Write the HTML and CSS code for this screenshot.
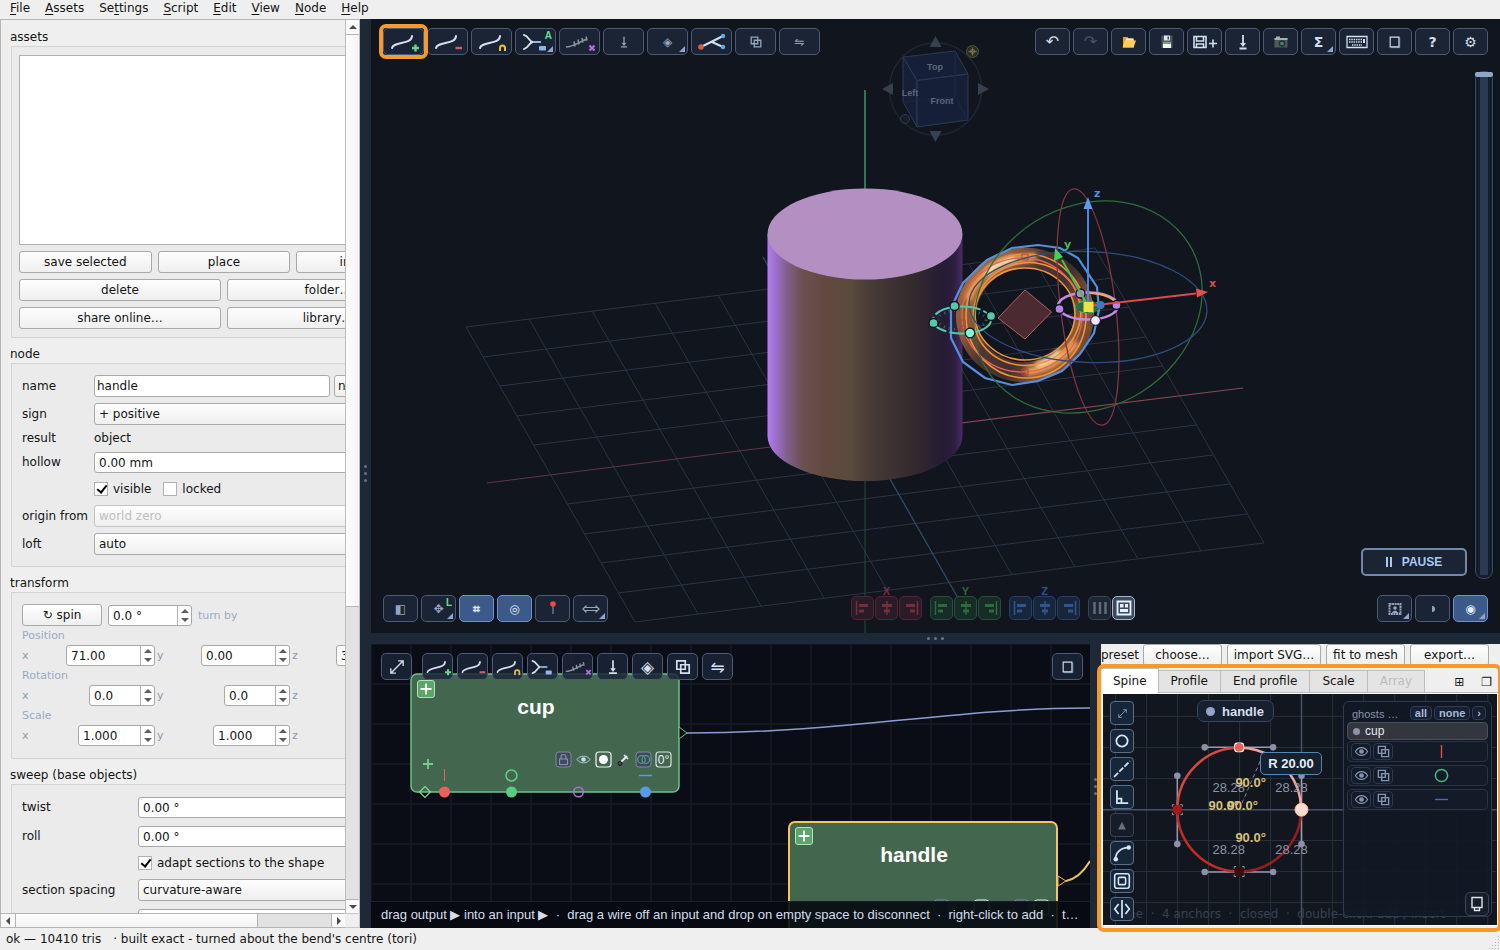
FILE: index.html
```html
<!DOCTYPE html>
<html lang="en">
<head>
<meta charset="utf-8">
<title>Modeller</title>
<link rel="stylesheet" href="styles.css">
</head>
<body>
<svg class="defs" aria-hidden="true">
  <symbol id="curve" viewBox="0 0 32 24"><path d="M4 18c1-7 20-3 20-12" fill="none" stroke="currentColor" stroke-width="2" stroke-linecap="round"/></symbol>
  <symbol id="curve-add" viewBox="0 0 32 24"><use href="#curve"/><path d="M24 18h7M27.500 14.500v7" stroke="#6fd28c" stroke-width="2.400"/></symbol>
  <symbol id="curve-del" viewBox="0 0 32 24"><use href="#curve"/><path d="M23.500 18h6.500" stroke="#d0606c" stroke-width="2.400"/></symbol>
  <symbol id="curve-snap" viewBox="0 0 32 24"><use href="#curve"/><path d="M24 21v-3a2.500 2.500 0 0 1 5 0v3" fill="none" stroke="#e8c040" stroke-width="2"/></symbol>
  <symbol id="merge" viewBox="0 0 32 24"><path d="M4 5c5 1 5 7 9 7c-4 0-4 6-9 7" fill="none" stroke="currentColor" stroke-width="2" stroke-linecap="round"/><path d="M13 12h8" stroke="#8fb4ee" stroke-width="2"/><rect x="19" y="16" width="7" height="4.500" rx="1" fill="#8fb4ee"/></symbol>
  <symbol id="ticks" viewBox="0 0 32 24"><path d="M2 17c7 0 13-5 21-8M10 11.500l1 5M14 9.500l1 5M18 8l1 4.500M22 6.500l1 4" fill="none" stroke="#8b93a3" stroke-width="1.600"/><path d="M25.500 15.500l5 5M30.500 15.500l-5 5" stroke="#b06fdc" stroke-width="2.200"/></symbol>
  <symbol id="branch" viewBox="0 0 32 24"><path d="M5 17l10-5l12-6M16 12l11 5" fill="none" stroke="#d5deee" stroke-width="2"/><circle cx="5" cy="17" r="2.800" fill="#e05a40"/><circle cx="27" cy="6" r="2.200" fill="#58b0e8"/><circle cx="27" cy="17" r="2.200" fill="#58b0e8"/></symbol>
  <symbol id="copy" viewBox="0 0 16 16"><path d="M2.500 2.500h7.500v7.500h-7.500zM6 6h7.500v7.500h-7.500z" fill="none" stroke="currentColor" stroke-width="1.500"/></symbol>
  <symbol id="down" viewBox="0 0 16 16"><path d="M8 2v8M4.500 13.500h7" fill="none" stroke="currentColor" stroke-width="1.500"/><path d="M5.500 9h5l-2.500 3.500z" fill="currentColor"/></symbol>
  <symbol id="expand" viewBox="0 0 16 16"><path d="M2.500 13.500l11-11M9 2.500h4.500v4.500M2.500 9v4.500h4.500" fill="none" stroke="currentColor" stroke-width="1.200"/></symbol>
  <symbol id="eye" viewBox="0 0 16 16"><path d="M1.500 8c3-5.500 10-5.500 13 0c-3 5.500-10 5.500-13 0z" fill="none" stroke="currentColor" stroke-width="1.200"/><circle cx="8" cy="8" r="2.500" fill="currentColor"/></symbol>
  <symbol id="plus-badge" viewBox="0 0 18 18"><rect x=".5" y=".5" width="17" height="17" rx="2.500" fill="#5aa569" stroke="#b4e0bd"/><path d="M9 3.500v11M3.500 9h11" stroke="#fff" stroke-width="1.800"/></symbol>
  <symbol id="shadow-page" viewBox="0 0 16 16"><path d="M13.500 3v11.500h-10" fill="none" stroke="#5f86b8" stroke-width="1"/><path d="M2.500 2.500h10v11h-10z" fill="none" stroke="currentColor" stroke-width="1.300"/></symbol>
  <symbol id="align" viewBox="0 0 16 18"><path d="M1.500 2v14" stroke="currentColor" stroke-width="1.500"/><path d="M4 6.500h9M4 12h5" stroke="currentColor" stroke-width="3"/></symbol>
  <symbol id="align-mid" viewBox="0 0 16 18"><path d="M8 2v14" stroke="currentColor" stroke-width="1.500"/><path d="M3 6.500h10M5 12h6" stroke="currentColor" stroke-width="3"/></symbol>
</svg>

<nav class="menubar" aria-label="Menu">
  <button><u>F</u>ile</button><button><u>A</u>ssets</button><button>Se<u>t</u>tings</button><button><u>S</u>cript</button><button><u>E</u>dit</button><button><u>V</u>iew</button><button><u>N</u>ode</button><button><u>H</u>elp</button>
</nav>

<main class="main">
  <aside class="side">
    <div class="scroll-area"><div class="side-content">
      <section>
        <h2>assets</h2>
        <div class="group assets">
          <div class="asset-list" role="listbox" aria-label="assets"></div>
          <div class="btn-row"><button class="btn">save selected</button><button class="btn">place</button><button class="btn">insert…</button></div>
          <div class="btn-row"><button class="btn">delete</button><button class="btn">folder…</button></div>
          <div class="btn-row"><button class="btn">share online…</button><button class="btn">library…</button></div>
        </div>
      </section>
      <section>
        <h2>node</h2>
        <div class="group form node-form">
          <label for="name">name</label><div class="name-row"><input class="field name-field" id="name" value="handle"><button class="btn name-btn">new</button></div>
          <label for="sign">sign</label><select class="field combo" id="sign"><option>+ positive</option></select>
          <span>result</span><span>object</span>
          <label for="hollow">hollow</label><input class="field num" id="hollow" value="0.00 mm">
          <span></span><div class="checks"><label><input type="checkbox" checked>visible</label><label><input type="checkbox">locked</label></div>
          <label for="origin">origin from</label><select class="field combo" id="origin" disabled><option>world zero</option></select>
          <label for="loft">loft</label><select class="field combo" id="loft"><option>auto</option></select>
        </div>
      </section>
      <section>
        <h2>transform</h2>
        <div class="group transform">
          <div class="spin-row"><button class="btn spin-btn">↻ spin</button><span class="spin turn"><input class="field num" id="turn" value="0.0 °"><i class="steps"></i></span><label for="turn" class="hint">turn by</label></div>
          <h3>Position</h3>
          <div class="xyz w-pos"><label>x<span class="spin"><input class="field num" value="71.00"><i class="steps"></i></span></label><label>y<span class="spin"><input class="field num" value="0.00"><i class="steps"></i></span></label><label>z<span class="spin"><input class="field num" value="35.00"><i class="steps"></i></span></label></div>
          <h3>Rotation</h3>
          <div class="xyz w-rot"><label>x<span class="spin"><input class="field num" value="0.0"><i class="steps"></i></span></label><label>y<span class="spin"><input class="field num" value="0.0"><i class="steps"></i></span></label><label>z<span class="spin"><input class="field num" value="0.0"><i class="steps"></i></span></label></div>
          <h3>Scale</h3>
          <div class="xyz w-scale"><label>x<span class="spin"><input class="field num" value="1.000"><i class="steps"></i></span></label><label>y<span class="spin"><input class="field num" value="1.000"><i class="steps"></i></span></label><label>z<span class="spin"><input class="field num" value="1.000"><i class="steps"></i></span></label></div>
        </div>
      </section>
      <section>
        <h2>sweep (base objects)</h2>
        <div class="group form sweep-form">
          <label for="twist">twist</label><input class="field num" id="twist" value="0.00 °">
          <label for="roll">roll</label><input class="field num" id="roll" value="0.00 °">
          <span></span><div class="checks"><label><input type="checkbox" checked>adapt sections to the shape</label></div>
          <label for="spacing">section spacing</label><select class="field combo" id="spacing"><option>curvature-aware</option></select>
          <label for="count">sections</label><input class="field num" id="count" value="">
        </div>
      </section>
    </div></div>
    <div class="vbar"><button class="arrow up" aria-label="Scroll up"></button><div class="vthumb"></div><div class="vtrack"></div><button class="arrow down" aria-label="Scroll down"></button></div>
    <div class="hbar"><button class="arrow left" aria-label="Scroll left"></button><div class="hthumb"></div><div class="htrack"></div><button class="arrow right" aria-label="Scroll right"></button></div>
    <div class="corner"></div>
  </aside>
  <div class="split split-v"><i></i><i></i><i></i></div>

  <div class="work">
    <section class="viewport" aria-label="3D view">
      <svg class="fill" viewBox="371 19 1129 614" preserveAspectRatio="xMidYMid slice">
        <defs>
          <linearGradient id="cyl"><stop offset="0" stop-color="#b47cf0"/><stop offset=".05" stop-color="#9a6cc4"/><stop offset=".1" stop-color="#80608c"/><stop offset=".18" stop-color="#6a5050"/><stop offset=".3" stop-color="#62493f"/><stop offset=".42" stop-color="#5a4a3e"/><stop offset=".55" stop-color="#453936"/><stop offset=".75" stop-color="#332a2d"/><stop offset=".9" stop-color="#251b34"/><stop offset=".96" stop-color="#2c1f40"/><stop offset="1" stop-color="#4a2c66"/></linearGradient>
          <linearGradient id="tor" x1="0" y1="0" x2="1" y2="1"><stop offset="0" stop-color="#a86a3c"/><stop offset=".25" stop-color="#8a5636"/><stop offset=".4" stop-color="#4e3632"/><stop offset=".6" stop-color="#43302e"/><stop offset=".8" stop-color="#8c5a36"/><stop offset="1" stop-color="#4c3430"/></linearGradient>
          <filter id="soft" x="-20%" y="-40%" width="140%" height="180%"><feGaussianBlur stdDeviation="2"/></filter>
        </defs>
        <g stroke="#2c3443" fill="none">
          <path d="M466 327L635 622M529 319L698 614M592 311L761 606M655 303L824 598M718 295L887 590M843 280L1012 575M906 272L1075 567M969 264L1138 559M1032 256L1201 551M1095 248L1264 543"/>
          <path d="M466 327L1095 248M483 357L1112 278M500 386L1129 307M517 416L1146 337M534 445L1163 366M567 504L1196 425M584 534L1213 455M601 563L1230 484M618 593L1247 514M635 622L1264 543"/>
        </g>
        <path d="M763 257L966 612" stroke="#2f4a66" stroke-width="1.300"/>
        <path d="M487 483L865 435" stroke="#613640"/><path d="M865 435L1243 388" stroke="#8a4650" stroke-width="1.200"/>
        <path d="M865 90V190" stroke="#3a9960" stroke-width="1.500"/><path d="M865 480V633" stroke="#1f4f3c"/>
        <path d="M767.500 234V436a97.500 45 0 0 0 195 0V234z" fill="url(#cyl)"/>
        <ellipse cx="865" cy="234" rx="97.500" ry="45.500" fill="#b490c2"/>
        <ellipse cx="1025" cy="315" rx="59" ry="57" transform="rotate(-14 1025 315)" fill="none" stroke="url(#tor)" stroke-width="20"/>
        <path d="M968 300C976 272 1004 258 1036 257" fill="none" stroke="#f0a050" stroke-width="8" filter="url(#soft)"/>
        <path d="M986 273Q998 261 1014 258" fill="none" stroke="#fff0c8" stroke-width="5" filter="url(#soft)"/>
        <path d="M1026 372Q1056 368 1076 342" fill="none" stroke="#f0a050" stroke-width="8" filter="url(#soft)"/>
        <path d="M1036 365Q1050 362 1060 351" fill="none" stroke="#fff0c8" stroke-width="5" filter="url(#soft)"/>
        <g fill="none" stroke="#ee943c" stroke-width="1.600"><ellipse cx="1025" cy="314" rx="50" ry="46"/><ellipse cx="1027" cy="314" rx="54" ry="51" transform="rotate(-20 1027 314)"/><ellipse cx="1026" cy="316" rx="60" ry="62"/><ellipse cx="1022" cy="315" rx="60" ry="57" stroke="#e2625c" stroke-width="1.300"/></g>
        <path d="M951 308v30l12 24l22 16l27 7l26-4l24-10l18-17l14-21l5-23l-2-23l-19-29l-18-10l-22-3l-26 3l-25 12l-24 23z" fill="none" stroke="#5590e0" stroke-width="2.200"/>
        <path d="M1025 290l26.500 22l-26.500 27l-27-21z" fill="#4c2a31" stroke="#b3605f"/>
        <g fill="none" stroke-width="1.300"><ellipse cx="1088" cy="307" rx="119" ry="100.500" transform="rotate(-32 1088 307)" stroke="#2f6b3c"/><ellipse cx="1088" cy="307" rx="119" ry="55.500" transform="rotate(2 1088 307)" stroke="#2d4c7e"/><ellipse cx="1088" cy="307" rx="119" ry="27.500" transform="rotate(83 1088 307)" stroke="#83343f"/></g>
        <g fill="none" stroke="#b04440"><path d="M1022 254h6v6h-6zM1022 369h6v6h-6zM959 320h6v6h-6z"/></g>
        <ellipse cx="962" cy="320" rx="29" ry="13.500" fill="none" stroke="#56c9ab" stroke-width="2" stroke-dasharray="22 3"/>
        <ellipse cx="962" cy="320" rx="24" ry="10" fill="none" stroke="#2c6a60" stroke-dasharray="1 4" stroke-width="3"/>
        <ellipse cx="1088" cy="306" rx="30" ry="13.500" fill="none" stroke="#c58be4" stroke-width="2.500"/><path d="M1090 293q20 1 27 11" fill="none" stroke="#f2a860" stroke-width="2"/>
        <ellipse cx="1088" cy="307" rx="13" ry="6" fill="#2e6a44" stroke="#49b872" stroke-dasharray="6 3"/>
        <g stroke="#0c1018" stroke-width="1.300"><g fill="#56c9ab"><circle cx="954.500" cy="306" r="4.500"/><circle cx="991" cy="316" r="4.500"/><circle cx="933.500" cy="323" r="4.500"/></g><circle cx="970" cy="333" r="4.800" fill="#80f4dc"/><g fill="#b884e4"><circle cx="1080.500" cy="293.500" r="4.500"/><circle cx="1059.500" cy="309" r="4.500"/><circle cx="1116.500" cy="305" r="4.500"/></g></g>
        <g fill="none" stroke-width="2"><path d="M1088 306V208" stroke="#4c86dc"/><path d="M1088 306L1196 293.500" stroke="#dc4a4c"/><path d="M1088 306L1062 260" stroke="#48c050"/></g>
        <circle cx="1100.500" cy="305" r="4" fill="#3f78c4"/><circle cx="1095.500" cy="320.500" r="4.800" fill="#f2e6fc" stroke="#0c1018"/>
        <path d="M1088 197l4.500 12h-9z" fill="#5b9bf4"/><path d="M1208 292l-12-3.500l1 9z" fill="#e6504e"/><path d="M1055 248l-1 13l9-4z" fill="#4ad050"/>
        <rect x="1083.500" y="302" width="10" height="10" fill="#ece24c"/>
        <g class="axis-labels"><text x="1209" y="287" fill="#d84c4c">x</text><text x="1064" y="248" fill="#48b850">y</text><text x="1094" y="197" fill="#5590e0">z</text></g>

        <circle cx="935.500" cy="89" r="46" fill="none" stroke="#1f2630" stroke-width="1.500"/>
        <g fill="#152038" stroke="#2a3a55" stroke-linejoin="round"><path d="M903 57L917 80.500V127L903 102z"/><path d="M903 57L955 51L968 74L917 80.500z"/><path d="M917 80.500L968 74V120L917 127z"/><path d="M955 51v46l13 23M955 97l-52 5" fill="none" stroke="#1b2940"/></g>
        <g fill="#36414f"><path d="M935.500 36l6 11h-12zM935.500 142l6-11h-12zM882 89l11-6v12zM989 89l-11-6v12z"/></g>
        <circle cx="972.500" cy="51.500" r="6" fill="#2c2d26" stroke="#55523a"/><path d="M972.500 47.500v8M968.500 51.500h8" stroke="#77704a"/><circle cx="972.500" cy="51.500" r="2" fill="none" stroke="#77704a"/>
        <circle cx="905" cy="119" r="4.500" fill="#171e2b" stroke="#303b4b"/>
        <g class="cube-labels"><text x="935" y="70">Top</text><text x="942" y="104">Front</text><text x="910" y="96">Left</text></g>
      </svg>

      <div class="bar tl">
        <button class="tool wide marked" aria-label="Add curve point"><svg><use href="#curve-add"/></svg></button>
        <button class="tool wide" aria-label="Remove curve point"><svg><use href="#curve-del"/></svg></button>
        <button class="tool wide" aria-label="Snap"><svg><use href="#curve-snap"/></svg></button>
        <button class="tool wide more" aria-label="Merge"><svg><use href="#merge"/></svg><b class="tag">A</b></button>
        <button class="tool wide" aria-label="Ticks"><svg><use href="#ticks"/></svg></button>
        <button class="tool wide dim" aria-label="Drop"><svg class="sm"><use href="#down"/></svg></button>
        <button class="tool wide dim more" aria-label="Solid">◈</button>
        <button class="tool wide" aria-label="Branch"><svg><use href="#branch"/></svg></button>
        <button class="tool wide dim" aria-label="Duplicate"><svg class="sm"><use href="#copy"/></svg></button>
        <button class="tool wide dim" aria-label="Swap">⇋</button>
      </div>
      <div class="bar tr">
        <button class="tool big" aria-label="Undo">↶</button>
        <button class="tool big faint" aria-label="Redo">↷</button>
        <button class="tool" aria-label="Open"><svg class="ic" viewBox="0 0 16 16"><path d="M2 3h4.500l1.500 1.500h5v9H2z" fill="#e8a030"/><path d="M4 6.500h11l-2.500 7H1.500z" fill="#ffcf5c"/><path d="M5 4.500h7v2H5z" fill="#f4efe0"/></svg></button>
        <button class="tool" aria-label="Save"><svg class="ic" viewBox="0 0 16 16"><path d="M2.500 1.500h11v12.500h-11z" fill="#4a5666"/><path d="M5 1.500h6v5H5z" fill="#dfe6ee"/><path d="M8.500 2.500h1.500v3H8.500z" fill="#3a4452"/><path d="M4 8.500h8v5.500H4z" fill="#f4f6f8"/><path d="M4 8.500h8v1.500H4z" fill="#5cae5c"/></svg></button>
        <button class="tool" aria-label="Save as"><svg class="ic saveas" viewBox="0 0 26 16"><path d="M2 2.500h12v11H2zM4.500 2.500v4.500h7V2.500M4.500 13.500v-3.500h7v3.500M17 9.500h8M21 5.500v8" fill="none" stroke="currentColor" stroke-width="1.600"/></svg></button>
        <button class="tool" aria-label="Export"><svg class="ic" viewBox="0 0 16 16"><path d="M8 1v10M4.500 14.500h7" fill="none" stroke="currentColor" stroke-width="1.800"/><path d="M5 9h6l-3 4z" fill="currentColor"/></svg></button>
        <button class="tool" aria-label="Screenshot"><svg class="ic" viewBox="0 0 16 16"><path d="M1.500 4h13v9.500h-13z" fill="#4d5a5c"/><path d="M1.500 4h13v2h-13zM3 2.500h4v1.500H3z" fill="#a8b0ae"/><circle cx="9" cy="9.500" r="3.300" fill="#26302f"/><circle cx="9" cy="9.500" r="1.800" fill="#3f8a7c"/></svg></button>
        <button class="tool more bold" aria-label="Sum">Σ</button>
        <button class="tool" aria-label="Keyboard"><svg class="ic saveas" viewBox="0 0 26 16"><path d="M3 2.500h20v11H3z" fill="none" stroke="currentColor" stroke-width="1.300"/><path d="M5 5.500h13M5 8h13M8 11h10" stroke="currentColor" stroke-width="1.500" stroke-dasharray="1.500 .8"/><path d="M19 5h2v4h-2z" fill="currentColor"/></svg></button>
        <button class="tool" aria-label="Detach"><svg class="ic thin"><use href="#shadow-page"/></svg></button>
        <button class="tool bold" aria-label="Help">?</button>
        <button class="tool" aria-label="Settings">⚙</button>
      </div>
      <input class="zoom" type="range" aria-label="Zoom" min="0" max="100" value="100">
      <button class="pause"><svg viewBox="0 0 6 10"><path d="M1 0v10M5 0v10" stroke="currentColor" stroke-width="2"/></svg>PAUSE</button>
      <div class="bar bl">
        <button class="tool dim" aria-label="Section">◧</button>
        <button class="tool dim more" aria-label="Move">✥<b class="tag">L</b></button>
        <button class="tool on bold" aria-label="Grid">⌗</button>
        <button class="tool on" aria-label="Target">◎</button>
        <button class="tool" aria-label="Pin"><svg class="ic" viewBox="0 0 16 16"><path d="M8 4v9" stroke="#8fa0b8"/><circle cx="8" cy="3" r="2.800" fill="#ee4a3a"/></svg></button>
        <button class="tool dim more" aria-label="Measure"><svg class="ic saveas" viewBox="0 0 26 16"><path d="M7 6.500h12M7 9.500h12M8.500 4.500L5 8l3.500 3.500M17.500 4.500L21 8l-3.500 3.500" fill="none" stroke="currentColor" stroke-width="1.200"/></svg></button>
      </div>
      <div class="aligns">
        <div class="axis ax"><b>X</b><button aria-label="Align X min"><svg><use href="#align"/></svg></button><button aria-label="Align X middle"><svg><use href="#align-mid"/></svg></button><button class="flip" aria-label="Align X max"><svg><use href="#align"/></svg></button></div>
        <div class="axis ay"><b>Y</b><button aria-label="Align Y min"><svg><use href="#align"/></svg></button><button aria-label="Align Y middle"><svg><use href="#align-mid"/></svg></button><button class="flip" aria-label="Align Y max"><svg><use href="#align"/></svg></button></div>
        <div class="axis az"><b>Z</b><button aria-label="Align Z min"><svg><use href="#align"/></svg></button><button aria-label="Align Z middle"><svg><use href="#align-mid"/></svg></button><button class="flip" aria-label="Align Z max"><svg><use href="#align"/></svg></button></div>
        <div class="axis an"><button aria-label="Distribute"><svg viewBox="0 0 16 18"><path d="M2.500 3v12M8 3v12M13.500 3v12" stroke="currentColor" stroke-width="2.500"/></svg></button><button class="lit" aria-label="Pack"><svg viewBox="0 0 16 18"><path d="M1.500 2.500h13v13h-13z" fill="none" stroke="currentColor" stroke-width="1.800"/><path d="M4 5h3.500v3.500H4zM9 5h3v3.500H9zM4 10h8v3H4z" fill="currentColor"/></svg></button></div>
      </div>
      <div class="bar br">
        <button class="tool dim more" aria-label="Backdrop"><svg class="ic" viewBox="0 0 16 16"><path d="M2.500 3h11v10h-11z" fill="none" stroke="currentColor" stroke-width="2" stroke-dasharray="2 .6"/><circle cx="8" cy="7" r="1.800" fill="currentColor"/><path d="M4.500 12q3.500-5 7 0z" fill="currentColor"/></svg></button>
        <button class="tool dim" aria-label="Shading"><svg class="ic" viewBox="0 0 16 16"><path d="M7 5a3 3 0 0 1 0 6z" fill="currentColor"/></svg></button>
        <button class="tool on more" aria-label="Render">◉</button>
      </div>
    </section>

    <div class="split split-h"><i></i><i></i><i></i></div>

    <div class="lower">
      <section class="nodes" aria-label="Node graph">
        <svg class="fill" viewBox="371 644 719 284" preserveAspectRatio="xMinYMin slice">
          <defs><pattern id="ngrid" x="410" y="683" width="40" height="40" patternUnits="userSpaceOnUse"><path d="M1 0v40M0 1h40" stroke="#131721" stroke-width="2"/></pattern></defs>
          <rect x="371" y="644" width="1600" height="900" fill="#0a0d15"/><rect x="371" y="644" width="1600" height="900" fill="url(#ngrid)"/>
          <path d="M687 733C850 733 950 708 1090 708" fill="none" stroke="#8d9dd2" stroke-width="1.500"/>
          <path d="M1066 881Q1080 878 1090 861" fill="none" stroke="#eec356" stroke-width="2"/>
          <rect x="411" y="674" width="268" height="118" rx="6" fill="#43664f" stroke="#6fc08a" stroke-width="1.500"/>
          <rect x="789" y="822" width="268" height="130" rx="6" fill="#43664f" stroke="#f2c75c" stroke-width="2"/>
          <path d="M679 727l8 6l-8 6z" fill="#0a0d15" stroke="#6fc08a"/><path d="M1058 876l8 5l-8 5z" fill="#0a0d15" stroke="#eec356"/>
          <use href="#plus-badge" x="417" y="680" width="18" height="18"/><use href="#plus-badge" x="795" y="827" width="18" height="18"/>
          <g class="node-title"><text x="536" y="714">cup</text><text x="914" y="862">handle</text></g>
          <path d="M423 764h10M428 759v10" stroke="#70cf8c" stroke-width="1.800"/><path d="M444.500 769v12" stroke="#e0685e"/><circle cx="511.500" cy="775.500" r="5.500" fill="none" stroke="#5fcf90" stroke-width="1.500"/><path d="M639 775.500h13" stroke="#5a98e8" stroke-width="1.500"/>
          <path d="M425 786.500l5.500 5.500l-5.500 5.500l-5.500-5.500z" fill="none" stroke="#80d89c" stroke-width="1.200"/><circle cx="444.500" cy="792" r="5.500" fill="#e8625c"/><circle cx="511.500" cy="792" r="5.500" fill="#5acb84"/><circle cx="578.500" cy="792" r="4.800" fill="none" stroke="#a877c8" stroke-width="1.500"/><circle cx="645.500" cy="792" r="5.500" fill="#5a98e8"/>
          <g fill="none">
            <rect x="556" y="752" width="15" height="15" rx="3" fill="#3e4a5c" stroke="#8088a0"/><path d="M559.500 759h8v5.500h-8zM561 759v-2a2.500 2.500 0 0 1 5 0v2" stroke="#8a92aa" stroke-width="1.200"/>
            <path d="M577 759.500c3-4.500 10-4.500 13 0c-3 4.500-10 4.500-13 0z" stroke="#b4c8d8"/><circle cx="583.500" cy="759.500" r="2.300" fill="#c8dcec"/>
            <rect x="596" y="752" width="15" height="15" rx="3" stroke="#eef4f0" stroke-width="1.200"/><circle cx="603.500" cy="759.500" r="4.500" fill="#fff"/>
            <path d="M621 762l6-6" stroke="#e8eef0" stroke-width="2"/><path d="M624 755l4 4" stroke="#e8eef0" stroke-width="1.500"/><circle cx="620" cy="763.500" r="2" fill="#48505a" stroke="#111"/>
            <rect x="636" y="752" width="15" height="15" rx="3" fill="#3e4a5c" stroke="#8088a0"/><circle cx="641.500" cy="759.500" r="3.800" stroke="#52a080" stroke-width="1.200"/><circle cx="645.800" cy="759.500" r="3.800" stroke="#52a080" stroke-width="1.200"/>
            <rect x="656" y="752" width="15" height="15" rx="3" stroke="#d8e4dc" stroke-width="1.200"/>
            <rect x="934" y="900" width="15" height="15" rx="3" fill="#3e4a5c" stroke="#8088a0"/><rect x="974" y="900" width="15" height="15" rx="3" stroke="#eef4f0"/><rect x="1014" y="900" width="15" height="15" rx="3" fill="#3e4a5c" stroke="#8088a0"/><rect x="1034" y="900" width="15" height="15" rx="3" stroke="#d8e4dc"/>
          </g>
          <text class="deg" x="663.500" y="764">0°</text>
        </svg>
        <div class="bar ntl">
          <button class="tool node-tool first" aria-label="Fit"><svg class="md"><use href="#expand"/></svg></button>
          <button class="tool node-tool" aria-label="Add curve"><svg><use href="#curve-add"/></svg></button>
          <button class="tool node-tool" aria-label="Remove curve"><svg><use href="#curve-del"/></svg></button>
          <button class="tool node-tool" aria-label="Snap curve"><svg><use href="#curve-snap"/></svg></button>
          <button class="tool node-tool" aria-label="Merge nodes"><svg><use href="#merge"/></svg></button>
          <button class="tool node-tool" aria-label="Ticks"><svg><use href="#ticks"/></svg></button>
          <button class="tool node-tool" aria-label="Drop"><svg class="md"><use href="#down"/></svg></button>
          <button class="tool node-tool glyph" aria-label="Solid">◈</button>
          <button class="tool node-tool" aria-label="Duplicate"><svg class="md"><use href="#copy"/></svg></button>
          <button class="tool node-tool glyph" aria-label="Swap">⇋</button>
        </div>
        <div class="bar ntr"><button class="tool node-tool" aria-label="Detach graph"><svg class="thin"><use href="#shadow-page"/></svg></button></div>
        <p class="node-hint">drag output ▶ into an input ▶ &nbsp;·&nbsp; drag a wire off an input and drop on empty space to disconnect &nbsp;·&nbsp; right-click to add &nbsp;·&nbsp; type to search</p>
      </section>
      <div class="split split-v"><i></i><i></i><i></i></div>

      <section class="editor" aria-label="Spine editor">
        <div class="preset"><span>preset</span><button class="btn">choose…</button><button class="btn import">import SVG…</button><button class="btn">fit to mesh</button><button class="btn">export…</button></div>
        <div class="tabbed">
          <div class="tabs" role="tablist">
            <button role="tab" class="tab cur" aria-selected="true">Spine</button><button role="tab" class="tab">Profile</button><button role="tab" class="tab">End profile</button><button role="tab" class="tab">Scale</button><button role="tab" class="tab" disabled>Array</button>
            <span class="tab-tools"><button aria-label="Grid view">⊞</button><button aria-label="Detach editor">❐</button></span>
          </div>
          <div class="sketch">
            <svg class="fill" viewBox="1103 694 395 232" preserveAspectRatio="xMinYMin slice">
              <defs><pattern id="sgrid" x="1115" y="716" width="31.100" height="31.100" patternUnits="userSpaceOnUse"><path d="M.5 0v32M0 .5h32" stroke="#262f3d"/></pattern></defs>
              <rect x="1103" y="694" width="900" height="700" fill="#12171f"/><rect x="1103" y="694" width="900" height="700" fill="url(#sgrid)"/>
              <path d="M1302 694V926M1103 810H1498" stroke="#465166" stroke-width="1.500"/>
              <path d="M1205 747.500h68.500M1205 872.500h68.500M1177.500 776v68.500M1302 776v68.500" stroke="#9a9ab0" stroke-width="1.500"/>
              <g fill="none" stroke-width="2.500"><path d="M1177.500 810A62 62 0 0 1 1239.500 748" stroke="#d84840"/><path d="M1239.500 748A62 62 0 0 1 1301.500 810" stroke="#f0a4a0"/><path d="M1301.500 810A62 62 0 0 1 1239.500 872" stroke="#9a1c1c"/><path d="M1239.500 872A62 62 0 0 1 1177.500 810" stroke="#c42a28"/></g>
              <path d="M1239.500 810L1262 758" stroke="#7a86a0" stroke-dasharray="4 3"/>
              <g fill="#8f90a8"><circle cx="1205" cy="747.500" r="3.300"/><circle cx="1273.500" cy="747.500" r="3.300"/><circle cx="1205" cy="872.500" r="3.300"/><circle cx="1273.500" cy="872.500" r="3.300"/><circle cx="1177.500" cy="776" r="3.300"/><circle cx="1177.500" cy="844.500" r="3.300"/><circle cx="1302" cy="776" r="3.300"/><circle cx="1302" cy="844.500" r="3.300"/></g>
              <g class="dims"><text x="1229" y="792">28.28</text><text x="1292" y="792">28.28</text><text x="1229" y="854">28.28</text><text x="1292" y="854">28.28</text></g>
              <g class="angles"><text x="1251" y="787">90.0°</text><text x="1224" y="810">90.0°</text><text x="1243" y="810">90.0°</text><text x="1251" y="842">90.0°</text></g>
              <rect x="1234.500" y="742.500" width="10" height="10" rx="3" fill="#fff"/><circle cx="1239.500" cy="747.500" r="4.500" fill="#e8605a"/>
              <circle cx="1302" cy="810" r="6.500" fill="#fbdcd4" stroke="#f4c088"/>
              <rect x="1172.500" y="805" width="10" height="10" fill="none" stroke="#999" stroke-dasharray="2 6 2 0"/><circle cx="1177.500" cy="810" r="4.800" fill="#a31818"/>
              <rect x="1234.500" y="867" width="10" height="10" fill="none" stroke="#999" stroke-dasharray="2 6 2 0"/><circle cx="1239.500" cy="872" r="4.800" fill="#3c0c0e"/>
              <text class="sketch-hint" x="1111" y="919" xml:space="preserve">spine  ·  4 anchors  ·  closed  ·  double-click: add / insert</text>
            </svg>
            <div class="stools">
              <button aria-label="Fit view"><svg class="dim"><use href="#expand"/></svg></button>
              <button aria-label="Circle"><svg viewBox="0 0 16 16"><circle cx="8" cy="8" r="5" fill="none" stroke="currentColor" stroke-width="1.600"/></svg></button>
              <button aria-label="Line"><svg viewBox="0 0 16 16"><path d="M1 15L15 1" stroke="currentColor" stroke-width="1.600" stroke-dasharray="5 1.500"/></svg></button>
              <button aria-label="Right angle"><svg viewBox="0 0 16 16"><path d="M3.500 2v11.500h10M3.500 9.500h4v4" fill="none" stroke="currentColor" stroke-width="1.600"/></svg></button>
              <button class="off" aria-label="Raise"><svg viewBox="0 0 16 16"><path d="M8 5l3.500 7h-7z" fill="currentColor"/></svg></button>
              <button aria-label="Arc"><svg viewBox="0 0 16 16"><path d="M2 14Q2.500 4 14 3" fill="none" stroke="currentColor" stroke-width="1.500"/><circle cx="2.500" cy="13.500" r="2" fill="currentColor"/><circle cx="14" cy="3" r="2" fill="currentColor"/></svg></button>
              <button aria-label="Offset"><svg viewBox="0 0 16 16"><rect x="1.500" y="1.500" width="13" height="13" rx="2" fill="none" stroke="currentColor" stroke-width="1.400"/><rect x="4.800" y="4.800" width="6.400" height="6.400" rx="1" fill="none" stroke="currentColor" stroke-width="1.400"/></svg></button>
              <button aria-label="Mirror"><svg viewBox="0 0 16 16"><path d="M8 0v16M5 3.500L1.500 8L5 12.500M11 3.500L14.500 8L11 12.500" fill="none" stroke="currentColor" stroke-width="1.500"/></svg></button>
              <button aria-label="More"></button>
            </div>
            <div class="chip"><i></i>handle</div>
            <div class="radius">R 20.00</div>
            <div class="ghosts">
              <div class="ghead"><span>ghosts …</span><button>all</button><button>none</button><button>›</button></div>
              <div class="gname"><i></i>cup</div>
              <div class="grow"><button aria-label="Show line"><svg><use href="#eye"/></svg></button><button aria-label="Copy line"><svg><use href="#copy"/></svg></button><svg class="mark" viewBox="0 0 16 16"><path d="M8 1v14" stroke="#d4504c" stroke-width="1.500"/></svg></div>
              <div class="grow"><button aria-label="Show circle"><svg><use href="#eye"/></svg></button><button aria-label="Copy circle"><svg><use href="#copy"/></svg></button><svg class="mark" viewBox="0 0 16 16"><circle cx="8" cy="8" r="6.500" fill="none" stroke="#4cb87e" stroke-width="1.600"/></svg></div>
              <div class="grow"><button aria-label="Show dash"><svg><use href="#eye"/></svg></button><button aria-label="Copy dash"><svg><use href="#copy"/></svg></button><svg class="mark" viewBox="0 0 16 16"><path d="M1 8h14" stroke="#3c70b0" stroke-width="1.500"/></svg></div>
              <button class="dock" aria-label="Dock"><svg viewBox="0 0 16 16"><path d="M3 1.500h10v10H3zM5.500 11.500v3h5v-3" fill="none" stroke="currentColor" stroke-width="1.400"/></svg></button>
            </div>
          </div>
        </div>
      </section>
    </div>
  </div>
</main>
<footer class="status"><span>ok — 10410 tris</span><span>· built exact - turned about the bend's centre (tori)</span><i class="grip"></i></footer>
</body>
</html>
```

FILE: styles.css
```css
* { box-sizing: border-box; }
body { margin: 0; height: 100vh; display: flex; flex-direction: column; overflow: hidden; background: #efefef; color: #141414; font: 12px/15px "DejaVu Sans", sans-serif; }
button, input, select { font: inherit; color: inherit; margin: 0; }
button { padding: 0; background: none; border: 0; }
h2, h3, p { margin: 0; font: inherit; }
.defs { position: absolute; width: 0; height: 0; }

.menubar { display: flex; align-items: flex-start; gap: 1px; height: 19px; padding-left: 3px; flex: none; }
.menubar button { padding: 0 7px; line-height: 17px; }
.menubar u { text-underline-offset: 2px; }
.main { flex: 1; min-height: 0; display: grid; grid-template-columns: 24% 11px minmax(0, 1fr); }
.status { flex: none; height: 22px; padding: 3px 6px; display: flex; gap: 12px; position: relative; line-height: 16px; }
.grip { position: absolute; right: 1px; bottom: 1px; width: 11px; height: 14px; background: radial-gradient(#b4b4b4 1px, transparent 1px) 0 0 / 3px 3px; clip-path: polygon(100% 0, 100% 100%, 0 100%); }

/* Side panel */
.side { display: grid; grid-template: minmax(0, 1fr) 15px / minmax(0, 1fr) 15px; border: 1px solid #b5b5b5; border-right: 0; border-bottom: 0; min-height: 0; }
.scroll-area { overflow: hidden; min-height: 0; }
.side-content { width: 446px; padding: 9px 10px 0; }
h2 { height: 16px; line-height: 16px; margin: 8px 0 1px -1px; }
section:first-child > h2 { margin-top: 0; }
.group { background: #ebebeb; border: 1px solid #d3d3d3; }
.btn { height: 22px; border: 1px solid #a9a9a9; border-radius: 3px; background: linear-gradient(#fefefe, #efefef); line-height: 19px; text-align: center; }
.field { height: 22px; min-width: 0; width: 100%; border: 1px solid #a9a9a9; border-radius: 3px; background: #fff; padding: 0 4px; }
.num { height: 21px; }
.combo { appearance: none; background: linear-gradient(#fefefe, #efefef); }
.combo:disabled { color: #bebebe; border-color: #c4c4c4; opacity: 1; }
.assets { padding: 8px 7px; display: flex; flex-direction: column; gap: 6px; }
.asset-list { height: 190px; background: #fff; border: 1px solid #b0b0b0; }
.btn-row { display: grid; grid-auto-flow: column; grid-auto-columns: 1fr; gap: 6px; }
.form { display: grid; align-items: center; padding: 11px 10px; }
.node-form { grid-template-columns: 66px 1fr; gap: 6px; }
.node-form > label { white-space: nowrap; }
.sweep-form { grid-template-columns: 108px 1fr; gap: 8px; padding-top: 12px; }
.name-row { display: flex; gap: 4px; }
.name-row .name-field { flex: none; width: 236px; padding: 0 2px; }
.name-btn { flex: 1; text-align: left; padding-left: 3px; }
.checks { display: flex; gap: 12px; height: 20px; align-items: center; }
.sweep-form .checks { height: 16px; }
.checks label { display: flex; align-items: center; gap: 5px; }
.checks input { appearance: none; width: 14px; height: 14px; border: 1px solid #b2b2b2; background: #fff; }
.checks input:checked::before { content: ""; display: block; width: 4px; height: 8px; margin: 0 0 0 4px; border: solid #000; border-width: 0 2px 2px 0; transform: rotate(38deg); }
.transform { padding: 11px 10px 12px; }
.spin-row { display: flex; align-items: end; gap: 6px; }
.spin-row .hint { line-height: 20px; }
.spin-btn { width: 80px; }
.turn { width: 84px; }
.spin { display: flex; position: relative; }
.steps { position: absolute; right: 0; top: 1px; bottom: 1px; width: 15px; border-left: 1px solid #b4b4b4; }
.steps::before, .steps::after { content: ""; position: absolute; left: 3px; border: 4px solid transparent; }
.steps::before { top: 0; border-bottom-color: #5c5c5c; border-top-width: 3px; }
.steps::after { bottom: 0; border-top-color: #5c5c5c; border-bottom-width: 3px; }
h3, .hint, .xyz label { font-size: 11px; color: #9aaac2; }
h3 { height: 15px; margin: 2px 0; }
.xyz { display: grid; grid-template-columns: repeat(3, 133px); gap: 2px; }
.xyz label { display: flex; justify-content: space-between; align-items: center; color: #8d99ab; }
.xyz .spin { font-size: 12px; color: #141414; }
.w-pos .spin { width: 89px; }
.w-rot .spin { width: 66px; }
.w-scale .spin { width: 77px; }

.vbar { display: flex; flex-direction: column; border: 1px solid #bdbdbd; border-width: 0 1px 0 1px; }
.vthumb { flex: 573; background: linear-gradient(90deg, #fdfdfd, #f3f3f3); border: solid #b5b5b5; border-width: 1px 0; }
.vtrack { flex: 293; background: #e2e2e2; }
.hbar { display: flex; border: solid #b5b5b5; border-width: 1px 0; }
.hthumb { flex: 243; background: linear-gradient(#fdfdfd, #f3f3f3); border: solid #b5b5b5; border-width: 0 1px; }
.htrack { flex: 73; background: #e2e2e2; }
.corner { border: 1px solid #c8c8c8; border-left: 0; }
.arrow { flex: 0 0 14px; position: relative; background: #fafafa; display: grid; place-items: center; }
.arrow::before { content: ""; border: 4px solid transparent; }
.vbar .arrow.down { border-top: 1px solid #b5b5b5; }
.hbar .arrow.right { border-left: 1px solid #b5b5b5; }
.up::before { border-bottom-color: #4a4a4a; margin-bottom: 4px; }
.down::before { border-top-color: #4a4a4a; margin-top: 4px; }
.left::before { border-right-color: #4a4a4a; margin-right: 4px; }
.right::before { border-left-color: #4a4a4a; margin-left: 4px; }

.split { background: #1e2937; display: flex; align-items: center; justify-content: center; gap: 4px; }
.split-v { flex-direction: column; }
.split i { width: 3px; height: 3px; border-radius: 2px; background: #65758d; }

/* Work area */
.work { display: grid; grid-template-rows: minmax(0, 614fr) 11px minmax(0, 284fr); min-width: 0; min-height: 0; }
.viewport, .nodes { position: relative; overflow: hidden; background: #10151e; font-family: "Liberation Sans", sans-serif; }
.fill { position: absolute; inset: 0; width: 100%; height: 100%; display: block; }
.axis-labels { font: bold 11px "DejaVu Sans", sans-serif; }
.cube-labels { font: bold 9px "Liberation Sans", sans-serif; fill: #5d6778; text-anchor: middle; }
.bar { position: absolute; display: flex; gap: 3px; }
.tl { left: 12px; top: 9px; }
.tr { right: 12px; top: 9px; }
.bl { left: 12px; bottom: 11px; }
.br { right: 12px; bottom: 11px; }
.tool { position: relative; width: 35px; height: 27px; border: 1px solid #4a5b77; border-radius: 5px; background: #1a2434; color: #d3deee; display: grid; place-items: center; font: 14px/20px "DejaVu Sans", sans-serif; }
.tool svg { width: 32px; height: 24px; }
.tool svg.sm { width: 14px; height: 14px; }
.tool svg.md { width: 18px; height: 18px; }
.tool svg.ic { width: 16px; height: 16px; }
.tool svg.saveas { width: 26px; height: 16px; }
.tool svg.thin { width: 16px; height: 14px; }
.wide { width: 41px; }
.marked::after { content: ""; position: absolute; inset: -5px; border: 4px solid #f59a2c; border-radius: 7px; z-index: 2; }
.dim { color: #93a5bf; font-size: 12px; }
.faint { color: #46536a; }
.big { font-size: 16px; }
.bold { font-weight: bold; }
.on { background: #3b5a89; border-color: #6f93c8; color: #e2edfc; font-size: 12px; }
.more::before { content: ""; position: absolute; right: 2px; bottom: 2px; border: 3px solid; border-color: transparent #91a6c8 #91a6c8 transparent; }
.tag { position: absolute; right: 3px; top: 1px; font: bold 10px/12px "Liberation Sans", sans-serif; color: #6fdc90; }
.zoom { position: absolute; right: 7px; top: 52px; bottom: 54px; width: 18px; margin: 0; writing-mode: vertical-lr; direction: rtl; appearance: none; background: linear-gradient(#2a3a50, #2a3a50) center / 8px calc(100% - 6px) no-repeat, #141d2a; border: 1px solid #3a4a62; border-radius: 8px; }
.zoom::-webkit-slider-thumb { appearance: none; width: 18px; height: 5px; border-radius: 2px; background: #90a6c8; }
.pause { position: absolute; right: 33px; bottom: 57px; width: 106px; height: 28px; border: 2px solid #7288ab; border-radius: 5px; background: #1a2434; color: #adc8ee; font: bold 12px/20px "Liberation Sans", sans-serif; display: flex; align-items: center; justify-content: center; gap: 10px; }
.pause svg { width: 6px; height: 10px; }
.aligns { position: absolute; left: 480px; bottom: 13px; display: flex; gap: 8px; }
.axis { position: relative; display: flex; gap: 1px; }
.axis b { position: absolute; left: 0; right: 0; top: -11px; text-align: center; font-size: 11px; line-height: 12px; }
.axis button { width: 23px; height: 24px; border: 1px solid; border-radius: 5px; display: grid; place-items: center; }
.axis svg { width: 16px; height: 18px; }
.flip svg { transform: scaleX(-1); }
.ax { color: #752f3b; } .ax button { background: #2a1c27; border-color: #4f2631; }
.ay { color: #2d6b3e; } .ay button { background: #172b27; border-color: #24503a; }
.az { color: #30548c; } .az button { background: #18263b; border-color: #263f66; }
.an { color: #5d6a7d; } .an button { background: #1d2633; border-color: #384558; }
.an .lit { color: #e6f0fa; background: #3b4b5f; border-color: #a7b6c8; }

/* Lower row */
.lower { display: grid; grid-template-columns: minmax(0, 719fr) 10px minmax(0, 400fr); min-height: 0; }
.node-title { font: bold 21px "Liberation Sans", sans-serif; fill: #fff; text-anchor: middle; }
.deg { font: 12px "Liberation Sans", sans-serif; fill: #f0f6f2; text-anchor: middle; }
.ntl { left: 10px; top: 9px; gap: 4px; }
.ntr { right: 7px; top: 9px; }
.node-tool { width: 31px; background: rgba(27, 38, 54, .85); }
.node-tool svg { width: 28px; height: 24px; }
.node-tool.first { margin-right: 6px; }
.glyph { font-size: 17px; }
.node-hint { position: absolute; left: 0; right: 0; bottom: 0; height: 27px; padding: 0 8px 0 10px; border-top: 1px solid #1b212b; background: rgba(7, 10, 16, .9); color: #d4ddec; font-size: 13px; line-height: 25px; white-space: nowrap; overflow: hidden; text-overflow: ellipsis; }

.editor { display: flex; flex-direction: column; position: relative; min-width: 0; min-height: 0; background: #efefef; border-left: 1px solid #1e2937; }
.preset { display: flex; gap: 5px; height: 22px; flex: none; }
.preset span { line-height: 22px; margin-right: -1px; }
.preset .btn { width: 79px; }
.preset .import { width: 94px; }
.tabbed { flex: 1; min-height: 0; display: flex; flex-direction: column; padding: 2px 2px 2px 1px; position: relative; }
.tabbed::after { content: ""; position: absolute; inset: -2px -2px -4px -4px; border: 4px solid #f9982a; border-radius: 7px; pointer-events: none; z-index: 3; }
.tabs { display: flex; align-items: flex-end; height: 25px; flex: none; border-bottom: 1px solid #bdbdbd; }
.tab { height: 22px; padding: 0 12px; border: 1px solid #bdbdbd; border-left: 0; border-bottom: 0; background: #e4e4e4; }
.tab.cur { height: 25px; padding: 0 11px; background: #fff; margin-bottom: -1px; }
.tab:disabled { color: #bdbdbd; }
.tab-tools { margin-left: auto; display: flex; gap: 17px; padding-right: 6px; line-height: 20px; }
.sketch { position: relative; flex: 1; min-height: 0; overflow: hidden; border: 1px solid #fff; font-family: "Liberation Sans", sans-serif; }
.dims { font: 13px "Liberation Sans", sans-serif; fill: #8a94a8; text-anchor: middle; }
.angles { font: bold 13px "Liberation Sans", sans-serif; fill: #d8c07c; text-anchor: middle; }
.sketch-hint { font: 12px "DejaVu Sans", sans-serif; fill: #384252; }
.stools { position: absolute; left: 7px; top: 7px; display: flex; flex-direction: column; gap: 4px; }
.stools button { width: 24px; height: 24px; border: 1px solid #54708f; border-radius: 4px; background: #18263a; color: #d6e6f6; display: grid; place-items: center; }
.stools svg { width: 18px; height: 18px; }
.stools svg.dim { width: 11px; height: 11px; }
.stools .off { border-color: #394454; background: #161d29; color: #667080; }
.chip, .radius { position: absolute; display: flex; align-items: center; font-weight: bold; font-size: 13px; color: #d5def0; background: #17202e; }
.chip { left: 94px; top: 6px; height: 22px; width: 77px; gap: 7px; padding-left: 8px; border: 1px solid #35455e; border-radius: 7px; }
.chip i, .gname i { width: 9px; height: 9px; border-radius: 50%; background: #97a3c8; }
.radius { left: 157px; top: 58px; height: 23px; width: 62px; justify-content: center; border: 1px solid #5488b4; border-radius: 5px; color: #e4eef8; }
.ghosts { position: absolute; right: 5px; top: 7px; bottom: 8px; width: 149px; padding: 4px 3px; border: 1px solid #2e3b50; border-radius: 6px; background: rgba(17, 24, 35, .9); }
.ghead { display: flex; gap: 2px; padding: 0 2px 0 5px; font-size: 11px; color: #8795ae; }
.ghead span { flex: 1; line-height: 16px; white-space: nowrap; }
.ghead button { height: 14px; padding: 0 4px; border: 1px solid #2e3d55; border-radius: 4px; background: #172030; color: #a8bad8; font-weight: bold; line-height: 12px; }
.gname { display: flex; align-items: center; gap: 5px; height: 18px; padding-left: 5px; margin-bottom: 1px; border: 1px solid #4a4f59; border-radius: 4px; background: #33363d; color: #e4e8f0; font-size: 12px; }
.gname i { width: 7px; height: 7px; background: #8e93a6; }
.grow { display: flex; align-items: center; gap: 2px; height: 21px; margin-bottom: 3px; padding-left: 3px; border: 1px solid #293447; border-radius: 4px; background: #141b28; }
.grow button { width: 20px; height: 17px; border: 1px solid #2c3a50; border-radius: 4px; color: #8295b2; display: grid; place-items: center; }
.grow button svg { width: 15px; height: 15px; }
.mark { width: 15px; height: 15px; margin: 0 auto; }
.dock { position: absolute; right: 2px; bottom: 0; width: 24px; height: 24px; border: 1px solid #3a475c; border-radius: 5px; background: #171e2a; color: #dce4ee; display: grid; place-items: center; }
.dock svg { width: 16px; height: 16px; }
```
